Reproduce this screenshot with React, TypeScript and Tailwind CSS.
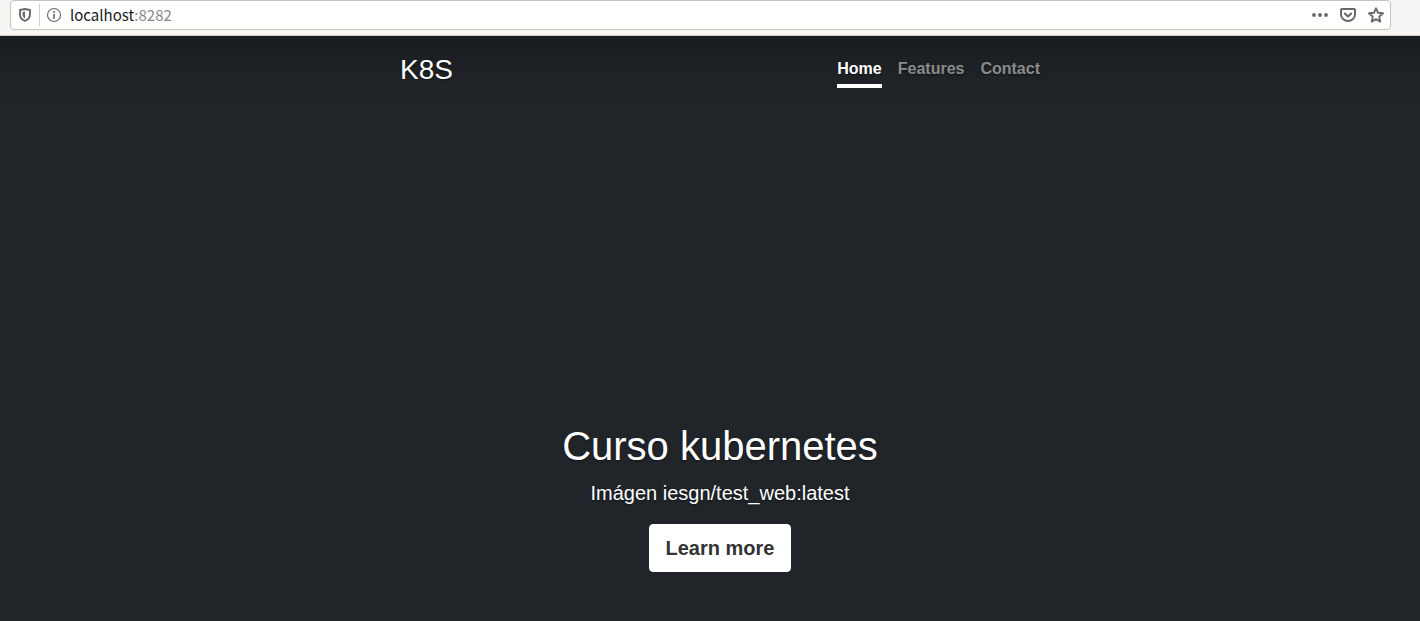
import React from "react";

const textShadow = "[text-shadow:0_1px_2px_rgba(0,0,0,0.5)]";

function ShieldIcon() {
  return (
    <svg viewBox="0 0 16 16" className="size-4" fill="none" aria-hidden="true">
      <path d="M8 2 13 3v4.200c0 3.300-1.800 5.400-5 6.800-3.200-1.400-5-3.500-5-6.800V3z" stroke="#68686a" strokeWidth="1.900" strokeLinejoin="round" />
      <path d="M8 4.600v6.800C6.400 10.400 5.600 9.200 5.600 7.200V5.100z" fill="#68686a" />
    </svg>
  );
}

function InfoIcon() {
  return (
    <svg viewBox="0 0 16 16" className="size-4" fill="none" aria-hidden="true">
      <circle cx="8" cy="8" r="6.500" stroke="#68686a" strokeWidth="1.100" />
      <circle cx="8" cy="4.900" r="1" fill="#68686a" />
      <path d="M8 7v4.700" stroke="#68686a" strokeWidth="1.700" />
    </svg>
  );
}

function DotsIcon() {
  return (
    <svg viewBox="0 0 16 16" className="size-4" fill="#68686a" aria-hidden="true">
      <circle cx="2" cy="8" r="1.900" />
      <circle cx="8" cy="8" r="1.900" />
      <circle cx="14" cy="8" r="1.900" />
    </svg>
  );
}

function PocketIcon() {
  return (
    <svg viewBox="0 0 16 16" className="size-4" fill="none" stroke="#68686a" strokeWidth="2" strokeLinecap="round" strokeLinejoin="round" aria-hidden="true">
      <path d="M1.800 2h12.400a.8.8 0 0 1 .8.8v4.700a7 6.500 0 0 1-14 0V2.800a.8.8 0 0 1 .8-.8z" />
      <path d="M4.800 6.500 8 9.500l3.200-3" />
    </svg>
  );
}

function StarIcon() {
  return (
    <svg viewBox="0 0 16 16" className="size-4" fill="none" stroke="#68686a" strokeWidth="1.900" strokeLinejoin="round" aria-hidden="true">
      <path d="m8 1.300 2 4.500 5 .5-3.800 3.300 1.100 5L8 12.200l-4.300 2.400 1.100-5L1 6.300l5-.5z" />
    </svg>
  );
}

function AddressBar() {
  return (
    <div className="h-9 border-b border-[#d0ccc8] bg-[#f6f5f4] pr-[29px] pl-[10px]">
      <div className="flex h-[30px] items-center rounded border border-[#c9c3bc] bg-white px-[6px]">
        <button type="button" aria-label="Tracking protection"><ShieldIcon /></button>
        <span className="mx-[6px] h-[22px] w-px bg-[#cfcfcf]" />
        <button type="button" aria-label="Site information"><InfoIcon /></button>
        <a href="#top" className="ml-2 grow font-['Noto_Sans_CJK_SC',sans-serif] text-[15px] leading-7 text-[#1a1a1a]">
          localhost<span className="text-[#888888]">:8282</span>
        </a>
        <div className="flex gap-3">
          <button type="button" aria-label="Page actions"><DotsIcon /></button>
          <button type="button" aria-label="Save to Pocket"><PocketIcon /></button>
          <button type="button" aria-label="Bookmark"><StarIcon /></button>
        </div>
      </div>
    </div>
  );
}

export default function App() {
  return (
    <div id="top" className="flex min-h-screen flex-col font-['Liberation_Sans',Arial,sans-serif]">
      <AddressBar />
      <div className={`flex grow flex-col bg-[#212529] bg-[linear-gradient(to_bottom,rgba(0,0,0,0.25)_0px,rgba(0,0,0,0.154)_20px,rgba(0,0,0,0.079)_40px,rgba(0,0,0,0.033)_60px,rgba(0,0,0,0.011)_80px,transparent_100px)] pl-5 text-white ${textShadow}`}>
        <div className="mx-auto flex w-full max-w-2xl grow flex-col p-4">
          <header className="flex items-start justify-between">
            <h3 className="text-[28px] leading-9">K8S</h3>
            <nav className="flex gap-4 text-base leading-[26px] font-bold">
              <a href="#home" className="border-b-4 border-white pt-1 pb-[2px]">Home</a>
              <a href="#features" className="border-b-4 border-transparent pt-1 pb-[2px] text-white/50">Features</a>
              <a href="#contact" className="border-b-4 border-transparent pt-1 pb-[2px] text-white/50">Contact</a>
            </nav>
          </header>
          <main className="mt-auto flex flex-col items-center pb-[33px] text-center">
            <h1 className="text-[40px] leading-12">Curso kubernetes</h1>
            <p className="mt-2 text-xl leading-[30px]">Imágen iesgn/test_web:latest</p>
            <a href="#more" className="mt-4 rounded border border-white bg-white px-4 py-2 text-xl leading-[30px] font-bold text-[#333333] [text-shadow:none]">
              Learn more
            </a>
          </main>
        </div>
      </div>
    </div>
  );
}
